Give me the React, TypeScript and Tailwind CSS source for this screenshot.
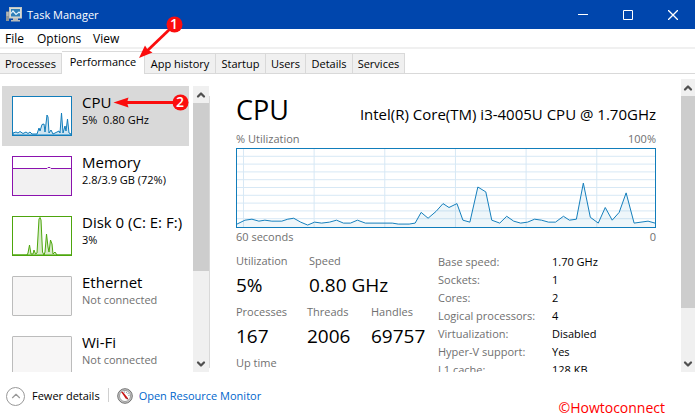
import { useState } from 'react';
import { ChevronDown, ChevronUp } from 'lucide-react';
import clsx from 'clsx';

const menus = [
  { label: 'File', width: 'w-6' },
  { label: 'Options', width: 'w-12' },
  { label: 'View', width: 'w-10' },
];

const tabs = [
  { label: 'Processes', width: 'w-[62px]' },
  { label: 'Performance', width: 'w-[83px]' },
  { label: 'App history', width: 'w-[71px]' },
  { label: 'Startup', width: 'w-[50px]' },
  { label: 'Users', width: 'w-[40px]' },
  { label: 'Details', width: 'w-[47px]' },
  { label: 'Services', width: 'w-[52px]' },
];

const resources = [
  { name: 'CPU', detail: '5%  0.80 GHz', kind: 'cpu' },
  { name: 'Memory', detail: '2.8/3.9 GB (72%)', kind: 'memory' },
  { name: 'Disk 0 (C: E: F:)', detail: '3%', kind: 'disk' },
  { name: 'Ethernet', detail: 'Not connected', kind: 'off' },
  { name: 'Wi-Fi', detail: 'Not connected', kind: 'off' },
];

const specs = [
  ['Base speed:', '1.70 GHz'],
  ['Sockets:', '1'],
  ['Cores:', '2'],
  ['Logical processors:', '4'],
  ['Virtualization:', 'Disabled'],
  ['Hyper-V support:', 'Yes'],
  ['L1 cache:', '128 KB'],
];

const cpuHistory =
  '0,77 8,73 15,72 22,74 28,73 35,74 45,74 51,72 57,71 64,75 71,78 78,75 85,76 93,75 100,73 107,76 114,76 121,73 129,76 156,76 162,77 173,77 179,76 185,65 192,71 200,64 207,56 213,60 221,56 227,73 234,75 242,39 250,44 256,73 264,76 271,69 278,74 285,76 292,75 299,72 306,73 313,75 320,75 328,69 334,73 341,72 348,35 355,70 363,76 370,60 377,73 384,65 391,45 399,76 413,74 420,76';

function Thumb({ kind }: { kind: string }) {
  if (kind === 'cpu') {
    return (
      <svg className="mt-1 h-10 w-15 shrink-0" viewBox="0 0 60 40" fill="none">
        <rect x=".5" y=".5" width="59" height="39" fill="#fff" stroke="#117dbb" />
        <path
          d="M1 37L4 36L6 37L8 35.500L11 37.500L14 36L16 37.500L18 36L20 38L25 38L27 32L28 35L30 28.500L32 28L33 36L35 19L36 21L37 37L39 34L41 38L44 36.500L47 35L48 37L49.500 17L51 37L53 30L54 35L55.500 23L57 37L59 38V39H1z"
          fill="#117dbb"
          fillOpacity=".2"
          stroke="#117dbb"
        />
      </svg>
    );
  }
  if (kind === 'memory') {
    return (
      <svg className="mt-1 h-10 w-15 shrink-0" viewBox="0 0 60 40" fill="none">
        <rect x=".5" y=".5" width="59" height="39" fill="#fff" />
        <path d="M1 13h59v27H1z" fill="#f2f1f2" />
        <path d="M1 12.500h34l1-1h2l1 1h20" stroke="#8b12ae" />
        <rect x=".5" y=".5" width="59" height="39" stroke="#8b12ae" />
      </svg>
    );
  }
  if (kind === 'disk') {
    return (
      <svg className="mt-1 h-10 w-15 shrink-0" viewBox="0 0 60 40" fill="none">
        <rect x=".5" y=".5" width="59" height="39" fill="#fff" stroke="#4da60c" />
        <path
          d="M1 39L15 39L16 37L17.500 29L19 38L21 38L22 34L23.500 38L25 37L26 20L27 3L28 1.500L29 4L30.500 36L32 39L33 36L34.500 18L36 31L37 36L38.500 24L40 28L41 38L43 36L45 39H59z"
          fill="#4da60c"
          fillOpacity=".22"
          stroke="#4da60c"
        />
      </svg>
    );
  }
  return <div className="mt-1 h-10 w-15 shrink-0 rounded-[1px] border border-[#bcbcbc] bg-[#f7f6f6]" />;
}

function Scrollbar({ width, thumb }: { width: string; thumb: string }) {
  return (
    <div className={clsx('flex shrink-0 flex-col bg-[#f0f0f0]', width)}>
      <button aria-label="Scroll up" className="flex h-[17px] shrink-0 items-center justify-center text-[#505050]">
        <ChevronUp size={12} strokeWidth={4.5} />
      </button>
      <div className="min-h-0 flex-1">
        <div className={clsx('bg-[#cdcdcd]', thumb)} />
      </div>
      <button aria-label="Scroll down" className="flex h-[17px] shrink-0 items-center justify-center text-[#505050]">
        <ChevronDown size={12} strokeWidth={4.5} />
      </button>
    </div>
  );
}

function Stat({ label, value }: { label: string; value?: string }) {
  return (
    <div className="h-[51px] whitespace-nowrap">
      <div className="text-[#707070]">{label}</div>
      <div className="pt-0.5 text-[19px] leading-7">{value}</div>
    </div>
  );
}

function TaskManagerIcon() {
  return (
    <svg className="h-4 w-4" viewBox="0 0 16 16" fill="none">
      <path d="M0 4.500h3V14H0z" fill="#8e9498" />
      <path d="M.5 6h2M.5 8h2" stroke="#d8dcdf" />
      <path d="M7 11h5v2h2v1.500H5V13h2z" fill="#b9bcbc" />
      <rect x="3.500" y=".5" width="12" height="10.500" fill="#d9dbd6" stroke="#c3c6c2" />
      <rect x="5" y="2" width="9" height="7.500" fill="#2f7fb8" />
      <path d="M5 6.500l2-2.500 3 3.500L13 5l1 1" stroke="#e3f4ff" strokeWidth="1.200" />
    </svg>
  );
}

function GaugeIcon() {
  return (
    <svg className="h-4 w-4" viewBox="0 0 16 16" fill="none">
      <circle cx="8" cy="8" r="7.300" fill="#c9c9c9" stroke="#707070" />
      <circle cx="8" cy="8" r="5.500" fill="#fff" stroke="#8a8a8a" strokeWidth=".8" />
      <path d="M7 4.200a4 4 0 0 1 4.800 4.800" stroke="#8fa3ab" strokeWidth="1.200" strokeDasharray="1 1" />
      <path d="M4 3.800l2 .2L10.500 9.500l-1.500 1.500z" fill="#c81414" />
      <path d="M9 11l1.500-1.500 1 2z" fill="#8a1010" />
    </svg>
  );
}

// red numbered markers with their arrows
function Markers() {
  return (
    <>
      <svg className="pointer-events-none absolute top-0 left-0 h-28 w-48" viewBox="0 0 192 112">
        <g stroke="#fb0d0d" strokeWidth="2.800">
          <path d="M171 28L147 51" />
          <path d="M173 102.500H125" />
        </g>
        <path d="M139 58l6-12.500 2.500 4 5 3z" fill="#fb0d0d" />
        <path d="M113.500 102.500l15-5-1.500 5 1.500 5z" fill="#fb0d0d" />
        <circle cx="174.500" cy="24.500" r="8" fill="#fb0d0d" />
        <circle cx="180.500" cy="102.500" r="8" fill="#fb0d0d" />
      </svg>
      <span className="absolute top-4 left-[166px] w-4 text-center text-sm leading-4 font-semibold text-white">1</span>
      <span className="absolute top-[94px] left-[172px] w-4 text-center text-sm leading-4 font-semibold text-white">2</span>
    </>
  );
}

export default function App() {
  const [tab, setTab] = useState('Performance');
  const [selected, setSelected] = useState('CPU');

  return (
    <div className="relative flex h-screen flex-col overflow-hidden bg-white font-['Open_Sans','Noto_Sans',sans-serif] text-[11px] leading-4 text-black">
      {/* title bar */}
      <header className="flex h-[29px] shrink-0 items-center bg-[#0046ad] pl-1.5 text-white">
        <TaskManagerIcon />
        <h1 className="flex-1 pl-[5px]">Task Manager</h1>
        <button aria-label="Minimize" className="flex h-full w-[45px] items-center justify-center">
          <svg width="10" height="10" stroke="currentColor"><path d="M0 4.500h10" /></svg>
        </button>
        <button aria-label="Maximize" className="flex h-full w-[45px] items-center justify-center">
          <svg width="10" height="10" stroke="currentColor" fill="none"><path d="M.5.5h9v9h-9z" /></svg>
        </button>
        <button aria-label="Close" className="flex h-full w-[45px] items-center justify-center">
          <svg width="10" height="10" stroke="currentColor" strokeWidth="1.300"><path d="M0 0l10 10M10 0L0 10" /></svg>
        </button>
      </header>

      <nav className="flex h-5 shrink-0 gap-2 border-b-2 border-[#f0f0f0] pt-0.5 pl-[5px] text-xs">
        {menus.map((m) => (
          <button key={m.label} className={clsx('text-left', m.width)}>{m.label}</button>
        ))}
      </nav>

      <div role="tablist" className="flex h-[25px] shrink-0 items-end border-b border-[#d9d9d9]">
        {tabs.map((t) => (
          <button
            key={t.label}
            role="tab"
            aria-selected={tab === t.label}
            onClick={() => setTab(t.label)}
            className={clsx(
              'shrink-0 border-t border-r border-[#d9d9d9] whitespace-nowrap',
              t.width,
              tab === t.label ? '-mb-px h-[23px] bg-white pb-0.5' : 'h-5 bg-[#f0f0f0]',
            )}
          >
            {t.label}
          </button>
        ))}
      </div>

      <main className="flex min-h-0 flex-1">
        <div className="flex shrink-0 pt-3">
          <ul className="w-[193px] overflow-hidden pr-1 pl-0.5">
            {resources.map((r) => (
              <li key={r.name}>
                <button
                  onClick={() => setSelected(r.name)}
                  className={clsx(
                    'flex h-15 w-full items-start gap-2.5 pt-1.5 pl-2.5 text-left whitespace-nowrap',
                    selected === r.name && 'bg-[#d9d9d9]',
                  )}
                >
                  <Thumb kind={r.kind} />
                  <span>
                    <span className="block text-[15px] leading-5">{r.name}</span>
                    <span className={clsx('block whitespace-pre', r.kind === 'off' && 'text-[#707070]')}>
                      {r.detail}
                    </span>
                  </span>
                </button>
              </li>
            ))}
          </ul>
          <Scrollbar width="w-4" thumb="h-2/3" />
          <div className="mt-2.5 mb-1 w-px bg-[#d9d9d9]" />
        </div>

        <section className="min-w-0 flex-1 overflow-hidden pt-4 pr-[25px] pl-[26px]">
          <div className="flex items-baseline justify-between whitespace-nowrap">
            <h2 className="text-[27px] leading-10">CPU</h2>
            <p className="text-[15px]">Intel(R) Core(TM) i3-4005U CPU @ 1.70GHz</p>
          </div>
          <div className="flex justify-between py-px text-[#707070]">
            <span>% Utilization</span>
            <span>100%</span>
          </div>
          <svg className="block h-20 w-full border border-[#117dbb]" viewBox="0 0 420 80" preserveAspectRatio="none">
            <g stroke="#d6e8f5">
              {[8, 16, 24, 32, 40, 48, 56, 64, 72].map((y) => <path key={y} d={`M0 ${y - 0.5}h420`} />)}
              {[7, 78, 149, 220, 291, 362].map((x) => <path key={x} d={`M${x - 0.5} 0v80`} />)}
            </g>
            <polygon points={`0,80 ${cpuHistory} 420,80`} fill="#117dbb" fillOpacity=".07" />
            <polyline points={cpuHistory} fill="none" stroke="#117dbb" />
          </svg>
          <div className="flex justify-between pt-px text-[#707070]">
            <span>60 seconds</span>
            <span>0</span>
          </div>

          <div className="flex pt-2">
            <div className="w-[202px] shrink-0">
              <div className="flex">
                <div className="w-[73px]"><Stat label="Utilization" value="5%" /></div>
                <Stat label="Speed" value="0.80 GHz" />
              </div>
              <div className="flex">
                <div className="w-[71px]"><Stat label="Processes" value="167" /></div>
                <div className="w-16"><Stat label="Threads" value="2006" /></div>
                <Stat label="Handles" value="69757" />
              </div>
              <Stat label="Up time" />
            </div>
            <table className="self-start text-left whitespace-nowrap">
              <tbody>
                {specs.map(([label, value]) => (
                  <tr key={label} className="h-[18px]">
                    <th scope="row" className="w-[114px] min-w-[114px] p-0 font-normal text-[#707070]">{label}</th>
                    <td className="p-0">{value}</td>
                  </tr>
                ))}
              </tbody>
            </table>
          </div>
        </section>
        <div className="flex pt-[5px]">
          <Scrollbar width="w-3.5" thumb="h-[82%]" />
        </div>
      </main>

      <footer className="flex h-[45px] shrink-0 items-start pl-1.5">
        <button className="flex h-12 items-center gap-[7px]">
          <span className="flex h-[19px] w-[19px] items-center justify-center rounded-full border border-[#999] text-[#999]">
            <ChevronUp size={14} />
          </span>
          Fewer details
        </button>
        <div className="mt-4 ml-2 h-3.5 w-px bg-[#d0d0d0]" />
        <a href="#resmon" className="ml-2 flex h-12 items-center gap-1.5 text-[#0066cc]">
          <GaugeIcon />
          Open Resource Monitor
        </a>
        <span className="mt-6 mr-[30px] ml-auto text-sm leading-6 text-[#f00]">©Howtoconnect</span>
      </footer>

      <Markers />
    </div>
  );
}
